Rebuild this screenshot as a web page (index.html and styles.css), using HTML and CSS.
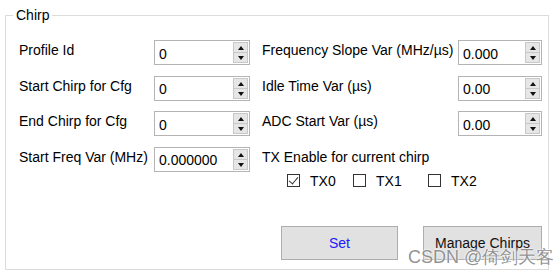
FILE: index.html
```html
<!DOCTYPE html>
<html>

<head>
    <title>Chirp</title>
    <link rel="stylesheet" href="styles.css">
</head>

<body>
    <fieldset class="group">
        <legend>Chirp</legend>
        <div class="columns">
            <div class="col col-left">
                <div class="row">
                    <label>Profile Id</label>
                    <div class="spin spin-wide"><span>0</span><div class="arrows"><i class="up"></i><i class="down"></i></div></div>
                </div>
                <div class="row">
                    <label>Start Chirp for Cfg</label>
                    <div class="spin spin-wide"><span>0</span><div class="arrows"><i class="up"></i><i class="down"></i></div></div>
                </div>
                <div class="row">
                    <label>End Chirp for Cfg</label>
                    <div class="spin spin-wide"><span>0</span><div class="arrows"><i class="up"></i><i class="down"></i></div></div>
                </div>
                <div class="row">
                    <label>Start Freq Var (MHz)</label>
                    <div class="spin spin-wide"><span>0.000000</span><div class="arrows"><i class="up"></i><i class="down"></i></div></div>
                </div>
            </div>
            <div class="col col-right">
                <div class="row">
                    <label>Frequency Slope Var (MHz/µs)</label>
                    <div class="spin"><span>0.000</span><div class="arrows"><i class="up"></i><i class="down"></i></div></div>
                </div>
                <div class="row">
                    <label>Idle Time Var (µs)</label>
                    <div class="spin"><span>0.00</span><div class="arrows"><i class="up"></i><i class="down"></i></div></div>
                </div>
                <div class="row">
                    <label>ADC Start Var (µs)</label>
                    <div class="spin"><span>0.00</span><div class="arrows"><i class="up"></i><i class="down"></i></div></div>
                </div>
                <div class="tx-title">TX Enable for current chirp</div>
                <div class="checks">
                    <span class="check check-0"><i class="box checked"></i>TX0</span>
                    <span class="check check-1"><i class="box"></i>TX1</span>
                    <span class="check"><i class="box"></i>TX2</span>
                </div>
                <div class="actions">
                    <button class="btn btn-set">Set</button>
                    <button class="btn btn-manage">Manage Chirps</button>
                </div>
            </div>
        </div>
        <div class="watermark">CSDN @倚剑天客</div>
    </fieldset>
</body>

</html>
```
FILE: styles.css
```css
body {
    margin: 0;
    background: #fff;
    font-family: "Liberation Sans", Arial, sans-serif;
    font-size: 14px;
    color: #000;
}

.group {
    position: relative;
    margin: 7px 0 0 5px;
    padding: 0;
    width: 544px;
    height: 263px;
    box-sizing: border-box;
    border: 1px solid #dcdcdc;
    border-radius: 0;
}

.group legend {
    margin-left: 7px;
    padding: 0 3px;
    font-size: 14px;
    line-height: 16px;
}

.columns {
    display: flex;
    padding: 17px 0 0 13px;
}

.col {
    display: flex;
    flex-direction: column;
    gap: 10.5px;
}

.col-left {
    width: 243px;
}

.row {
    display: flex;
    align-items: flex-start;
    height: 25px;
}

.row label {
    line-height: 16px;
    margin-top: 2px;
}

.col-left label {
    width: 135px;
}

.col-right label {
    width: 196px;
    white-space: nowrap;
}

.spin {
    display: flex;
    align-items: center;
    justify-content: space-between;
    box-sizing: border-box;
    width: 84px;
    height: 25px;
    border: 1px solid #b4b4b4;
    padding: 1px;
    font-size: 14px;
}

.spin-wide {
    width: 96px;
}

.spin span {
    padding-left: 3px;
    padding-top: 2px;
}

.arrows {
    display: flex;
    flex-direction: column;
    width: 15px;
    height: 21px;
}

.arrows i {
    flex: 1;
    position: relative;
    background: #e6e6e6;
    border: 1px solid #c8c8c8;
}

.arrows i + i {
    border-top: none;
}

.arrows i::after {
    content: "";
    position: absolute;
    left: 4px;
    border-left: 3.5px solid transparent;
    border-right: 3.5px solid transparent;
}

.arrows .up::after {
    top: 3px;
    border-bottom: 4px solid #111;
}

.arrows .down::after {
    top: 3px;
    border-top: 4px solid #111;
}

.tx-title {
    height: 16px;
    margin-top: 2px;
}

.checks {
    display: flex;
    align-items: center;
    padding-left: 25px;
    height: 15px;
    margin-top: -2px;
}

.check {
    display: flex;
    align-items: center;
    gap: 10px;
}

.check-0 {
    width: 66px;
}

.check-1 {
    width: 75px;
}

.box {
    position: relative;
    width: 13px;
    height: 13px;
    box-sizing: border-box;
    border: 1px solid #333;
    background: #fff;
}

.box.checked::after {
    content: "";
    position: absolute;
    left: 3px;
    top: 0px;
    width: 4px;
    height: 8px;
    border-right: 1px solid #333;
    border-bottom: 1px solid #333;
    transform: rotate(40deg);
}

.actions {
    display: flex;
    gap: 25px;
    padding-left: 19px;
    margin-top: 27px;
}

.btn {
    height: 34px;
    box-sizing: border-box;
    background: #e1e1e1;
    border: 1px solid #adadad;
    border-radius: 0;
    font-family: "Liberation Sans", Arial, sans-serif;
    font-size: 14px;
    padding: 0;
}

.btn-set {
    width: 117px;
    color: #1a1aff;
}

.btn-manage {
    width: 119px;
    color: #111;
}

.watermark {
    position: absolute;
    left: 402px;
    top: 222px;
    font-size: 18px;
    color: rgba(110, 110, 110, 0.75);
    text-shadow: 0 0 2px #fff, 0 0 2px #fff;
    white-space: nowrap;
}
```
